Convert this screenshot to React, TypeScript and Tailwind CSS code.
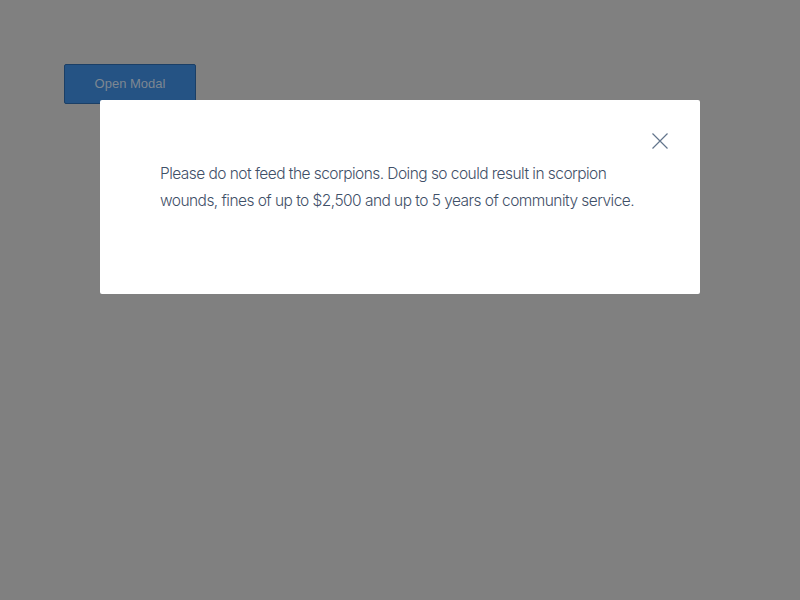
import React from "react";

export default function App() {
  return (
    <div className="relative w-[800px] h-[600px] bg-[#808080] overflow-hidden" style={{ fontFamily: "Inter, 'Liberation Sans', sans-serif" }}>
      <div className="p-16">
        <button className="w-[132px] h-10 bg-[#255384] border border-[#1b3f66] rounded-[2px] text-[13px] text-[#7d8792]" style={{ fontFamily: "'Liberation Sans', Arial, sans-serif" }}>
          Open Modal
        </button>
      </div>
      <div className="absolute left-[100px] top-[100px] w-[600px] bg-white px-[60px] pt-[60px] pb-[60px] rounded-[2px]">
        <button className="absolute left-[551px] top-[32px] w-[18px] h-[18px] flex items-center justify-center" aria-label="Close">
          <svg width="16" height="16" viewBox="0 0 16 16" fill="none">
            <path d="M0.5 0.5 L15.5 15.5 M15.5 0.5 L0.5 15.5" stroke="#62758c" strokeWidth="1.2" />
          </svg>
        </button>
        <p className="text-[15.5px] font-light leading-[27px] tracking-[-0.035em] text-[#3f5068] mb-5">
          Please do not feed the scorpions. Doing so could result in scorpion wounds, fines of up to $2,500 and up to 5 years of community service.
        </p>
      </div>
    </div>
  );
}
